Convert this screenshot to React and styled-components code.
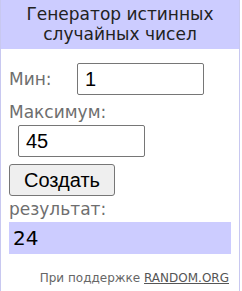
import React from "react";
import styled, { createGlobalStyle } from "styled-components";

const GlobalStyle = createGlobalStyle`
  html, body {
    margin: 0;
    padding: 0;
    background: #fff;
  }
  body {
    font-family: "DejaVu Sans", Verdana, sans-serif;
  }
`;

const Widget = styled.div`
  box-sizing: border-box;
  width: 240px;
  min-height: 300px;
  border: 1px solid #c8c8f0;
  border-top: none;
`;

const Header = styled.div`
  background: #ccccff;
  color: #222;
  text-align: center;
  font-size: 17px;
  line-height: 20px;
  padding: 4px 0 5px;
`;

const Body = styled.div`
  padding: 0 8px;
`;

const Row = styled.div`
  display: flex;
  align-items: center;
  margin-top: ${(p) => p.$top || 0}px;
`;

const Label = styled.div`
  color: #6e6e6e;
  font-size: 17px;
  line-height: 20px;
  width: ${(p) => (p.$w ? p.$w + "px" : "auto")};
  margin-top: ${(p) => p.$top || 0}px;
`;

const Field = styled.input`
  box-sizing: border-box;
  width: 127px;
  height: 32px;
  margin-left: ${(p) => p.$left || 0}px;
  border: 1px solid #767676;
  border-radius: 2px;
  padding: 0 7px;
  font-family: "Liberation Sans", Arial, sans-serif;
  font-size: 20px;
  color: #000;
  outline: none;
`;

const Button = styled.button`
  box-sizing: border-box;
  display: block;
  width: 106px;
  height: 32px;
  margin-top: 7px;
  background: #efefef;
  border: 1px solid #767676;
  border-radius: 3px;
  font-family: "Liberation Sans", Arial, sans-serif;
  font-size: 20px;
  color: #000;
  padding: 0;
`;

const Result = styled.div`
  background: #ccccff;
  height: 32px;
  margin-top: 3px;
  padding: 0 4px;
  font-size: 20px;
  line-height: 32px;
  color: #000;
`;

const Footer = styled.div`
  text-align: right;
  font-size: 12px;
  color: #666;
  margin-top: 17px;
  padding-right: 2px;

  a {
    color: #555;
    text-decoration: underline;
  }
`;

export default function App() {
  return (
    <>
      <GlobalStyle />
      <Widget>
        <Header>
          Генератор истинных
          <br />
          случайных чисел
        </Header>
        <Body>
          <Row $top={14}>
            <Label $w={68}>Мин:</Label>
            <Field defaultValue="1" />
          </Row>
          <Label $top={7}>Максимум:</Label>
          <Row $top={3}>
            <Field $left={9} defaultValue="45" />
          </Row>
          <Button>Создать</Button>
          <Label $top={3}>результат:</Label>
          <Result>24</Result>
          <Footer>
            При поддержке <a href="#">RANDOM.ORG</a>
          </Footer>
        </Body>
      </Widget>
    </>
  );
}
